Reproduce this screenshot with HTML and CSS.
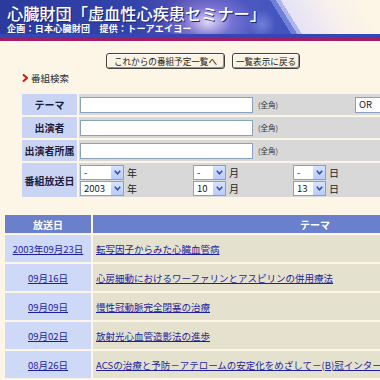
FILE: index.html
```html
<!DOCTYPE html>
<html lang="ja">
<head>
<meta charset="utf-8">
<title>心臓財団「虚血性心疾患セミナー」</title>
<link rel="stylesheet" href="styles.css">
</head>
<body>
<header class="banner">
  <div class="banner-main">
    <h1 class="title">心臓財団「虚血性心疾患セミナー」</h1>
    <p class="sub">企画：日本心臓財団　提供：トーアエイヨー</p>
  </div>
  <div class="stripe-blue"></div>
  <div class="stripe-red"></div>
</header>

<nav class="navbtns">
  <button class="btn btn-wide" type="button">これからの番組予定一覧へ</button>
  <button class="btn btn-back" type="button">一覧表示に戻る</button>
</nav>

<div class="section-title">
  <svg class="mark" width="6" height="8" viewBox="0 0 6 8"><path d="M1 0.5 L5 4 L1 7.5" fill="none" stroke="#d41818" stroke-width="2"/></svg>
  <span>番組検索</span>
</div>

<div class="search">
  <div class="lbl">テーマ</div>
  <div class="fld fld-text">
    <span class="inp"></span><span class="note">(全角)</span><span class="sel sel-or"><span class="val">OR</span></span>
  </div>

  <div class="lbl">出演者</div>
  <div class="fld fld-text">
    <span class="inp"></span><span class="note">(全角)</span>
  </div>

  <div class="lbl">出演者所属</div>
  <div class="fld fld-text">
    <span class="inp"></span><span class="note">(全角)</span>
  </div>

  <div class="lbl">番組放送日</div>
  <div class="fld fld-date">
    <div class="dgroup">
      <div class="sels">
        <span class="sel sel-year"><span class="val">-</span><span class="arr"><svg width="7" height="5" viewBox="0 0 7 5"><path d="M0.8 0.8 L3.5 3.8 L6.2 0.8" fill="none" stroke="#2c4fb8" stroke-width="1.6"/></svg></span></span>
        <span class="sel sel-year"><span class="val">2003</span><span class="arr"><svg width="7" height="5" viewBox="0 0 7 5"><path d="M0.8 0.8 L3.5 3.8 L6.2 0.8" fill="none" stroke="#2c4fb8" stroke-width="1.6"/></svg></span></span>
      </div>
      <div class="units"><span>年</span><span>年</span></div>
    </div>
    <div class="dgroup">
      <div class="sels">
        <span class="sel sel-md"><span class="val">-</span><span class="arr"><svg width="7" height="5" viewBox="0 0 7 5"><path d="M0.8 0.8 L3.5 3.8 L6.2 0.8" fill="none" stroke="#2c4fb8" stroke-width="1.6"/></svg></span></span>
        <span class="sel sel-md"><span class="val">10</span><span class="arr"><svg width="7" height="5" viewBox="0 0 7 5"><path d="M0.8 0.8 L3.5 3.8 L6.2 0.8" fill="none" stroke="#2c4fb8" stroke-width="1.6"/></svg></span></span>
      </div>
      <div class="units"><span>月</span><span>月</span></div>
    </div>
    <div class="dgroup">
      <div class="sels">
        <span class="sel sel-md"><span class="val">-</span><span class="arr"><svg width="7" height="5" viewBox="0 0 7 5"><path d="M0.8 0.8 L3.5 3.8 L6.2 0.8" fill="none" stroke="#2c4fb8" stroke-width="1.6"/></svg></span></span>
        <span class="sel sel-md"><span class="val">13</span><span class="arr"><svg width="7" height="5" viewBox="0 0 7 5"><path d="M0.8 0.8 L3.5 3.8 L6.2 0.8" fill="none" stroke="#2c4fb8" stroke-width="1.6"/></svg></span></span>
      </div>
      <div class="units"><span>日</span><span>日</span></div>
    </div>
  </div>
</div>

<table class="results">
  <thead>
    <tr><th class="c-date">放送日</th><th class="c-theme">テーマ</th></tr>
  </thead>
  <tbody>
    <tr><td class="c-date"><a href="#">2003年09月23日</a></td><td class="c-theme"><a href="#">転写因子からみた心臓血管病</a></td></tr>
    <tr><td class="c-date"><a href="#">09月16日</a></td><td class="c-theme"><a href="#">心房細動におけるワーファリンとアスピリンの併用療法</a></td></tr>
    <tr><td class="c-date"><a href="#">09月09日</a></td><td class="c-theme"><a href="#">慢性冠動脈完全閉塞の治療</a></td></tr>
    <tr><td class="c-date"><a href="#">09月02日</a></td><td class="c-theme"><a href="#">放射光心血管造影法の進歩</a></td></tr>
    <tr><td class="c-date"><a href="#">08月26日</a></td><td class="c-theme"><a href="#">ACSの治療と予防－アテロームの安定化をめざして－(B)冠インターベンション</a></td></tr>
  </tbody>
</table>
</body>
</html>
```
FILE: styles.css
```css
html {
  overflow: hidden;
}
body {
  margin: 0;
  background: #fdf5e6;
  font-family: "Noto Sans CJK JP", "Noto Sans", sans-serif;
  color: #1d1d3a;
}

/* banner */
.banner-main {
  height: 34px;
  box-sizing: border-box;
  padding: 4px 0 0 7px;
  background:
    linear-gradient(58deg, transparent 0 247px, #6f80d8 247px 252px, #aeb6ec 252px 256px, #e4e2f6 256px, #f6efee 290px, #fdf5e6 320px),
    radial-gradient(ellipse 14px 14px at 262px 24px, rgba(150,160,235,0.55), transparent 100%),
    radial-gradient(ellipse 48px 30px at 208px 22px, rgba(240,230,255,0.9), rgba(190,170,250,0.35) 50%, transparent 100%),
    linear-gradient(90deg, #2b3a9d 0, #3243ab 35%, #5650b4 50%, #4c58c0 65%, #3e52bd 80%);
}
.title {
  margin: 0;
  font-size: 16.2px;
  line-height: 18px;
  font-weight: 500;
  color: #ffffff;
  text-shadow: 1px 1px 0 #1b2378;
  white-space: nowrap;
}
.sub {
  margin: 2px 0 0;
  font-size: 9px;
  line-height: 10px;
  font-weight: 700;
  color: #ffffff;
  letter-spacing: 0.25px;
  white-space: nowrap;
}
.stripe-blue {
  height: 3px;
  background: #3447b5;
}
.stripe-red {
  height: 4px;
  background: #a11d66;
}

/* nav buttons */
.navbtns {
  display: flex;
  gap: 7px;
  padding-left: 106px;
  margin-top: 12px;
}
.btn {
  height: 16px;
  padding: 0;
  box-sizing: border-box;
  font-family: inherit;
  font-size: 8.6px;
  line-height: 14px;
  color: #1a1a1a;
  background: #faf3e2;
  border: 1px solid #3f3f3f;
  border-radius: 3px;
  box-shadow: inset -1px -1px 0 #9a9488, inset 1px 1px 0 #ffffff;
  white-space: nowrap;
  text-align: center;
}
.btn-wide {
  width: 119px;
}
.btn-back {
  width: 68px;
}

/* section title */
.section-title {
  display: flex;
  align-items: center;
  gap: 3px;
  padding-left: 22px;
  margin-top: 2px;
  height: 14px;
  font-size: 9.5px;
  color: #2a2a2a;
}
.mark {
  display: block;
}

/* search form */
.search {
  display: grid;
  grid-template-columns: 55px 420px;
  grid-template-rows: 21px 21px 21px 34px;
  gap: 2px;
  margin: 9px 0 0 22px;
  width: 477px;
}
.lbl {
  background: #c9d4f4;
  display: flex;
  align-items: center;
  justify-content: center;
  font-size: 10px;
  font-weight: 700;
  color: #1c1c3c;
  white-space: nowrap;
}
.fld {
  background: #d8d8d8;
  padding-left: 1px;
}
.fld-text {
  display: flex;
  align-items: center;
}
.inp {
  display: block;
  width: 173px;
  height: 16px;
  box-sizing: border-box;
  background: #ffffff;
  border: 1px solid #8aa2c0;
}
.note {
  width: 92px;
  margin-left: 5px;
  font-size: 7.5px;
  color: #333;
}
.fld-date {
  display: grid;
  grid-template-columns: 113px 100px 100px;
  align-items: center;
}
.dgroup {
  display: flex;
  gap: 3px;
}
.sels,
.units {
  display: flex;
  flex-direction: column;
  gap: 1px;
}
.units span {
  height: 15px;
  line-height: 15px;
  font-size: 10px;
  color: #222;
}
.sel {
  display: flex;
  align-items: center;
  height: 15px;
  box-sizing: border-box;
  background: #ffffff;
  border: 1px solid #8aa2c0;
  font-size: 9.5px;
  color: #222;
}
.sel .val {
  flex: 1;
  padding-left: 3px;
  line-height: 13px;
}
.sel .arr {
  width: 12px;
  height: 13px;
  background: linear-gradient(#d6e2fd, #b9cbf8);
  display: flex;
  align-items: center;
  justify-content: center;
}
.sel-year {
  width: 44px;
}
.sel-md {
  width: 33px;
}
.sel-or {
  width: 60px;
  height: 16px;
  margin-left: 5px;
}

/* results */
.results {
  margin: 16px 0 0 3px;
  border-collapse: separate;
  border-spacing: 2px;
  width: 536px;
  table-layout: fixed;
}
.results th {
  height: 18px;
  padding: 0;
  background: #6b80cc;
  color: #ffffff;
  font-size: 10px;
  font-weight: 700;
  text-align: center;
}
.results th.c-date {
  width: 86px;
}
.results td {
  height: 27px;
  padding: 0;
  font-size: 9.5px;
  white-space: nowrap;
  overflow: hidden;
}
.results td.c-date {
  background: #cdd9f7;
  text-align: center;
}
.results td.c-theme {
  background: #e4e2ce;
  padding-left: 3px;
}
.results a {
  color: #1e1ea0;
  text-decoration: underline;
}
```
